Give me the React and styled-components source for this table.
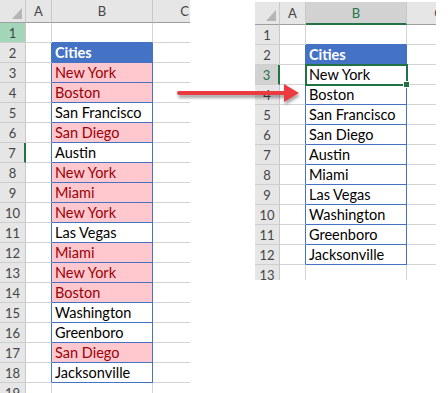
import React from 'react'
import styled, { createGlobalStyle, css } from 'styled-components'

const GlobalStyle = createGlobalStyle`
    body {
        margin: 0;
        background: #ffffff;
        font-family: "Lato", "Open Sans", sans-serif;
    }
`

const GREEN = '#217346'
const BLUE = '#4472C4'
const GRID = '#D4D4D4'

const Canvas = styled.div`
    position: relative;
    display: flex;
    align-items: flex-start;
    gap: 65px;
    width: 448px;
    height: 393px;
    overflow: hidden;
`

const Sheet = styled.div`
    flex: none;
    display: grid;
    grid-template-columns: ${(p) => p.$cols};
    grid-template-rows: ${(p) => p.$head}px;
    grid-auto-rows: 20px;
    width: ${(p) => p.$width}px;
    height: ${(p) => p.$height}px;
    margin-top: ${(p) => p.$top || 0}px;
    overflow: hidden;
`

const headBase = css`
    box-sizing: border-box;
    background: #e6e6e6;
    color: #444444;
    font-size: 13px;
    display: flex;
    align-items: center;
    justify-content: center;
`

const Corner = styled.div`
    ${headBase};
    position: relative;
    border-right: 1px solid #c8c8c8;
    border-bottom: 1px solid #9e9e9e;

    &::after {
        content: '';
        position: absolute;
        right: 3px;
        bottom: 3px;
        border-style: solid;
        border-width: 0 0 11px 10px;
        border-color: transparent transparent #b5b5b5 transparent;
    }
`

const ColHead = styled.div`
    ${headBase};
    border-right: 1px solid #c8c8c8;
    border-bottom: ${(p) => (p.$active ? `2px solid ${GREEN}` : '1px solid #9e9e9e')};
    background: ${(p) => (p.$active ? '#d2d2d2' : '#e6e6e6')};
    color: ${(p) => (p.$active ? GREEN : '#444444')};
`

const RowHead = styled.div`
    ${headBase};
    border-bottom: 1px solid #cfcfcf;
    border-right: ${(p) => (p.$mark ? `2px solid ${GREEN}` : '1px solid #c8c8c8')};
    background: ${(p) => (p.$tone === 'green' ? '#a3d6b8' : p.$tone === 'active' ? '#d2d2d2' : '#e6e6e6')};
    color: ${(p) => (p.$tone === 'active' ? GREEN : '#444444')};
`

const Cell = styled.div`
    box-sizing: border-box;
    position: relative;
    display: flex;
    align-items: center;
    padding-left: 3px;
    font-size: 14.5px;
    white-space: nowrap;
    color: #000000;
    border-right: 1px solid ${(p) => (p.$table || p.$edge ? BLUE : GRID)};
    border-bottom: 1px solid ${(p) => (p.$table || p.$above ? BLUE : GRID)};

    ${(p) =>
        p.$kind === 'head' &&
        css`
            background: ${BLUE};
            color: #ffffff;
            font-weight: 700;
        `}

    ${(p) =>
        p.$kind === 'dup' &&
        css`
            background: #ffc7ce;
            color: #9c0006;
        `}

    ${(p) =>
        p.$selected &&
        css`
            z-index: 1;
            outline: 2px solid ${GREEN};
            outline-offset: -1px;

            &::after {
                content: '';
                position: absolute;
                right: -4px;
                bottom: -4px;
                width: 5px;
                height: 5px;
                background: ${GREEN};
                border: 1px solid #ffffff;
            }
        `}
`

const Arrow = styled.svg`
    position: absolute;
    left: 170px;
    top: 78px;
    width: 140px;
    height: 32px;
`

const leftRows = [
    [null],
    ['Cities', 'head'],
    ['New York', 'dup'],
    ['Boston', 'dup'],
    ['San Francisco'],
    ['San Diego', 'dup'],
    ['Austin'],
    ['New York', 'dup'],
    ['Miami', 'dup'],
    ['New York', 'dup'],
    ['Las Vegas'],
    ['Miami', 'dup'],
    ['New York', 'dup'],
    ['Boston', 'dup'],
    ['Washington'],
    ['Greenboro'],
    ['San Diego', 'dup'],
    ['Jacksonville'],
    [null],
]

const rightRows = [
    [null],
    ['Cities', 'head'],
    ['New York'],
    ['Boston'],
    ['San Francisco'],
    ['San Diego'],
    ['Austin'],
    ['Miami'],
    ['Las Vegas'],
    ['Washington'],
    ['Greenboro'],
    ['Jacksonville'],
    [null],
]

function Spreadsheet({ rows, cols, width, height, head, top, greenRow, markRow, activeCol, selectedRow }) {
    return (
        <Sheet $cols={cols} $width={width} $height={height} $head={head} $top={top}>
            <Corner />
            <ColHead>A</ColHead>
            <ColHead $active={activeCol}>B</ColHead>
            <ColHead>C</ColHead>
            {rows.map(([text, kind], i) => {
                const n = i + 1
                const inTable = text !== null
                const headerNext = rows[i + 1] && rows[i + 1][1] === 'head'
                return (
                    <React.Fragment key={n}>
                        <RowHead
                            $tone={n === greenRow ? 'green' : n === selectedRow ? 'active' : undefined}
                            $mark={n === markRow || n === selectedRow}
                        >
                            {n}
                        </RowHead>
                        <Cell $edge={inTable} />
                        <Cell
                            $table={inTable}
                            $above={headerNext}
                            $kind={kind}
                            $selected={n === selectedRow}
                        >
                            {text}
                        </Cell>
                        <Cell />
                    </React.Fragment>
                )
            })}
        </Sheet>
    )
}

export default function App() {
    return (
        <Canvas>
            <GlobalStyle />
            <Spreadsheet
                rows={leftRows}
                cols="26px 26px 101px 64px"
                width={190}
                height={393}
                head={23}
                greenRow={1}
                markRow={7}
            />
            <Spreadsheet
                rows={rightRows}
                cols="25px 26px 101px 64px"
                width={181}
                height={278}
                head={23}
                top={2}
                activeCol
                selectedRow={3}
            />
            <Arrow viewBox="0 0 140 32">
                <defs>
                    <filter id="arrowShadow" x="-10%" y="-40%" width="120%" height="200%">
                        <feDropShadow dx="1" dy="3" stdDeviation="1.5" floodColor="#000" floodOpacity="0.35" />
                    </filter>
                </defs>
                <g filter="url(#arrowShadow)" fill="#ec3a3f">
                    <rect x="7" y="13" width="112" height="4" rx="2" />
                    <polygon points="114,6 129,15 114,24" />
                </g>
            </Arrow>
        </Canvas>
    )
}
